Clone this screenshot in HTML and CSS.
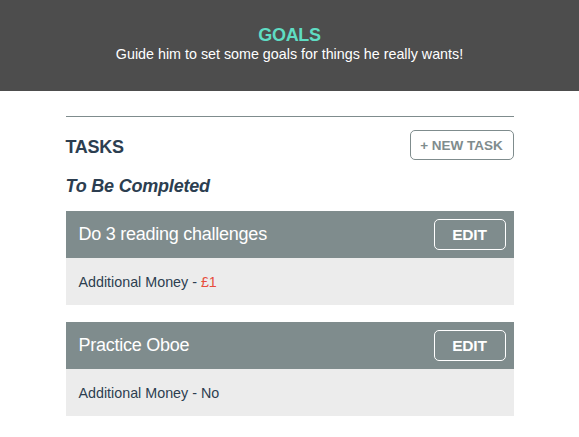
FILE: index.html
```html
<!DOCTYPE html>
<html>
<head>
<meta charset="utf-8">
<link rel="stylesheet" href="styles.css">
</head>
<body>
<header class="hero">
  <h1 class="hero-title">GOALS</h1>
  <p class="hero-sub">Guide him to set some goals for things he really wants!</p>
</header>
<main class="content">
  <hr class="divider">
  <div class="tasks-head">
    <h2 class="tasks-title">TASKS</h2>
    <button class="btn-new">+ NEW TASK</button>
  </div>
  <h3 class="section-title">To Be Completed</h3>
  <div class="card">
    <div class="card-head">
      <span class="card-title">Do 3 reading challenges</span>
      <button class="btn-edit">EDIT</button>
    </div>
    <div class="card-body">Additional Money - <span class="money">£1</span></div>
  </div>
  <div class="card">
    <div class="card-head">
      <span class="card-title">Practice Oboe</span>
      <button class="btn-edit">EDIT</button>
    </div>
    <div class="card-body">Additional Money - No</div>
  </div>
</main>
</body>
</html>
```
FILE: styles.css
```css
* { box-sizing: border-box; }
body {
  margin: 0;
  font-family: "Liberation Sans", Arial, sans-serif;
  background: #ffffff;
  color: #2c3e50;
}
.hero {
  background: #4d4d4d;
  height: 91px;
  padding-top: 25px;
  text-align: center;
}
.hero-title {
  margin: 0;
  font-size: 18px;
  line-height: 20px;
  font-weight: bold;
  color: #5fdcc3;
  letter-spacing: -0.3px;
}
.hero-sub {
  margin: 0;
  font-size: 14.3px;
  line-height: 18px;
  color: #ffffff;
  letter-spacing: 0;
}
.content {
  width: 448px;
  margin: 0 auto;
}
.divider {
  margin: 25px 0 0 0;
  border: 0;
  height: 1px;
  background: #7f8c8d;
}
.tasks-head {
  display: flex;
  justify-content: space-between;
  align-items: center;
  margin-top: 13px;
}
.tasks-title {
  margin: 4px 0 0 0;
  font-size: 18px;
  font-weight: bold;
  letter-spacing: -0.3px;
  color: #2c3e50;
}
.btn-new {
  width: 104px;
  height: 30px;
  border: 1px solid #7f8c8d;
  border-radius: 5px;
  background: #ffffff;
  color: #7f8c8d;
  font-family: "Liberation Sans", Arial, sans-serif;
  font-weight: bold;
  font-size: 13.5px;
  letter-spacing: 0;
  padding: 0;
}
.section-title {
  margin: 15px 0 14px 0;
  font-size: 18px;
  line-height: 22px;
  font-weight: bold;
  font-style: italic;
  letter-spacing: -0.2px;
  color: #2c3e50;
}
.card {
  margin-bottom: 17px;
}
.card-head {
  background: #7f8c8d;
  height: 47px;
  display: flex;
  align-items: center;
  justify-content: space-between;
  padding: 0 8px 0 13px;
}
.card-title {
  color: #ffffff;
  font-size: 18px;
  letter-spacing: -0.25px;
}
.btn-edit {
  width: 72px;
  height: 31px;
  border: 1px solid #ffffff;
  border-radius: 5px;
  background: transparent;
  color: #ffffff;
  font-family: "Liberation Sans", Arial, sans-serif;
  font-weight: bold;
  font-size: 15.5px;
  letter-spacing: -0.2px;
  padding: 0;
}
.card-body {
  background: #ececec;
  height: 47px;
  display: flex;
  align-items: center;
  padding-left: 13px;
  font-size: 14.3px;
  letter-spacing: 0;
  color: #2c3e50;
  white-space: pre;
}
.money {
  color: #e74c3c;
}
```
